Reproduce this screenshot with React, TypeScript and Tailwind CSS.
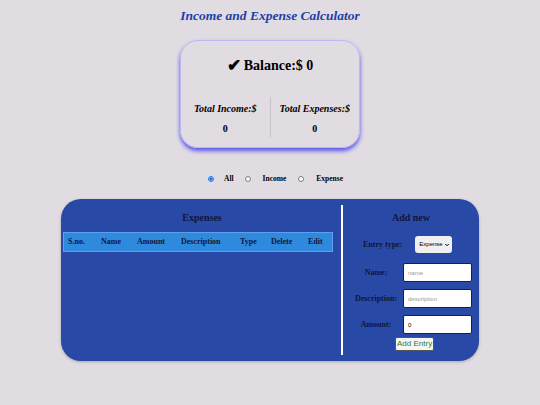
import { ChevronDown } from "lucide-react";

const serif = "font-['Liberation_Serif','Times_New_Roman',serif]";

const columns = ["S.no.", "Name", "Amount", "Description", "Type", "Delete", "Edit"];

function Field({ label, placeholder, value }: { label: string; placeholder?: string; value?: string }) {
	return (
		<div className="flex items-center">
			<label className="w-[52px] text-center text-[8px] font-bold text-[#10163a]">{label}</label>
			<input
				readOnly
				placeholder={placeholder}
				value={value ?? ""}
				className="ml-[1px] h-[19px] w-[69px] rounded-[2px] border border-[#222] bg-white px-[4px] font-['Liberation_Sans',Arial,sans-serif] text-[6px] text-black outline-none placeholder:text-[#999]"
			/>
		</div>
	);
}

export default function App() {
	return (
		<div className={`min-h-[405px] w-[540px] bg-[#e0dce1] ${serif}`}>
			<h1 className="pt-[7px] text-center text-[13.5px] leading-[18px] font-bold italic text-[#1f3ea8]">
				Income and Expense Calculator
			</h1>

			<div className="mx-auto mt-[15px] h-[108px] w-[180px] rounded-[18px] border border-[#bdb8f2] shadow-[0_3px_4px_#5a54ee]">
				<div className="flex items-center justify-center gap-[3px] pt-[15px] text-[14px] leading-[20px] font-bold text-black">
					<span className="text-[17px]">✔</span>
					<span>Balance:$ 0</span>
				</div>
				<div className="mt-[21px] flex">
					<div className="flex flex-1 flex-col items-center pt-[6px]">
						<span className="text-[10px] leading-[12px] font-bold italic">Total Income:$</span>
						<span className="mt-[8px] text-[10px] leading-[12px] font-bold">0</span>
					</div>
					<div className="h-[41px] w-px bg-[#c9c4ca]" />
					<div className="flex flex-1 flex-col items-center pt-[6px]">
						<span className="text-[10px] leading-[12px] font-bold italic">Total Expenses:$</span>
						<span className="mt-[8px] text-[10px] leading-[12px] font-bold">0</span>
					</div>
				</div>
			</div>

			<div className="mt-[26px] flex items-center justify-center pl-[11px] text-[7.5px] leading-[10px] font-bold text-black">
				<input type="radio" name="f" defaultChecked className="h-[6px] w-[6px] accent-[#1a73e8]" />
				<span className="ml-[10px]">All</span>
				<input type="radio" name="f" className="ml-[11px] h-[6px] w-[6px]" />
				<span className="ml-[12px]">Income</span>
				<input type="radio" name="f" className="ml-[12px] h-[6px] w-[6px]" />
				<span className="ml-[12px]">Expense</span>
			</div>

			<div className="mx-auto mt-[15px] flex h-[162px] w-[418px] rounded-[20px] bg-[#2849a6] py-[6px] shadow-[0_1px_3px_rgba(0,0,0,0.25)]">
				<div className="w-[280px] pl-[2px]">
					<h2 className="mt-[7px] text-center text-[10px] leading-[12px] font-bold text-[#10163a]">Expenses</h2>
					<div className="mt-[8px] grid h-[20px] w-[270px] grid-cols-[33px_36px_44px_59px_31px_37px_30px] items-center border border-[#5a9ff0] bg-[#2f8ade] pl-[4px] text-[8px] font-bold text-[#10163a]">
						{columns.map((c) => (
							<span key={c}>{c}</span>
						))}
					</div>
				</div>
				<div className="w-[2px] bg-white" />
				<div className="flex-1">
					<h2 className="mt-[7px] text-center text-[10px] leading-[12px] font-bold text-[#10163a]">Add new</h2>
					<div className="mt-[12px] flex items-center pl-[20px]">
						<span className="text-[8px] font-bold text-[#10163a]">Entry type:</span>
						<div className="ml-[13px] flex h-[17px] w-[37px] items-center justify-between rounded-[3px] bg-[#f0f0f0] pr-[2px] pl-[4px] font-['Liberation_Sans',Arial,sans-serif] text-[6px] text-black">
							Expense
							<ChevronDown size={6} strokeWidth={4} />
						</div>
					</div>
					<div className="mt-[10px] flex flex-col gap-[7px] pl-[7px]">
						<Field label="Name:" placeholder="name" />
						<Field label="Description:" placeholder="description" />
						<Field label="Amount:" value="0" />
					</div>
					<div className="mt-[3px] flex pl-[52px]">
						<button
							type="button"
							className="h-[14px] rounded-[2px] border border-[#555] bg-[#f5f5f5] px-[1px] font-['Liberation_Sans',Arial,sans-serif] text-[8px] leading-[12px] text-[#2e7d2e]"
						>
							Add Entry
						</button>
					</div>
				</div>
			</div>
		</div>
	);
}
